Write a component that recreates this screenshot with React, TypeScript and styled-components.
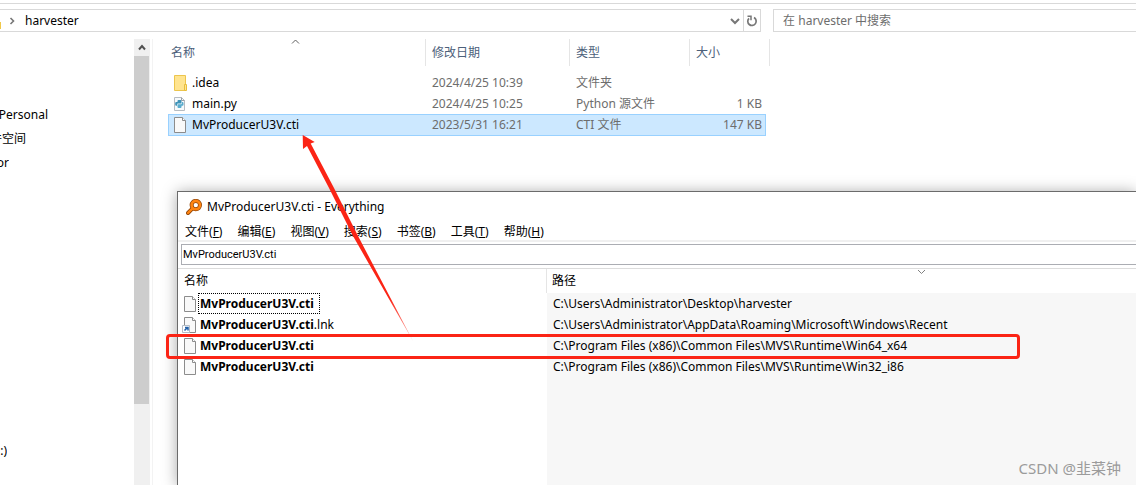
import React from 'react';
import styled, { createGlobalStyle, css } from 'styled-components';

const GlobalStyle = createGlobalStyle`
  *, *::before, *::after { box-sizing: border-box; }
  body { margin: 0; background: #fff; }
  body, button, input, table {
    font-family: "Noto Sans", "Noto Sans CJK SC", sans-serif;
    font-size: 12px;
    line-height: 20px;
    color: #000;
  }
  button { border: 0; padding: 0; background: none; text-align: left; }
  a { color: inherit; text-decoration: none; }
  table { border-spacing: 0; table-layout: fixed; }
  th, td { padding: 0; font-weight: 400; text-align: left; white-space: nowrap; }
`;

const Desktop = styled.main`
  position: relative;
  display: flex;
  flex-direction: column;
  min-height: 100vh;
  overflow: hidden;
`;

const Toolbar = styled.header`
  display: flex;
  gap: 12px;
  margin-top: 3px;
  padding-top: 5px;
  border-top: 1px solid #d9d9d9;
`;

const AddressBar = styled.div`
  display: flex;
  flex: 0 0 67%;
  height: 23px;
  border: 1px solid #d9d9d9;
  border-left: 0;
`;

const FolderEdge = styled.span`
  width: 1px;
  height: 7px;
  margin-top: 12px;
  background: #f0c84a;
`;

const Crumb = styled.button`
  display: flex;
  flex: 1;
  align-items: center;
  gap: 10px;
  padding-left: 8px;
`;

const AddressButton = styled.button<{ $divided?: boolean }>`
  display: flex;
  align-items: center;
  justify-content: center;
  width: 17px;
  ${p => p.$divided && css`border-left: 1px solid #d9d9d9;`}
`;

const FolderSearch = styled.input`
  flex: 1;
  min-width: 0;
  height: 23px;
  padding: 0 9px;
  border: 1px solid #d9d9d9;
  border-right: 0;
  outline: 0;
  &::placeholder { color: #6d6d6d; opacity: 1; }
`;

const Explorer = styled.div`
  display: flex;
  flex: 1;
  padding-top: 7px;
`;

const NavPane = styled.nav`
  display: flex;
  flex-direction: column;
  width: 134px;
  padding: 64px 0 22px;
`;

const NavItem = styled.a<{ $visible: number; $last?: boolean }>`
  display: flex;
  justify-content: flex-end;
  width: ${p => p.$visible}px;
  height: 24px;
  line-height: 24px;
  white-space: nowrap;
  overflow: hidden;
  ${p => p.$last && css`margin-top: auto;`}
`;

const ScrollTrack = styled.div`
  display: flex;
  flex-direction: column;
  width: 16px;
  background: #f0f0f0;
`;

const ScrollUp = styled.button`
  display: flex;
  align-items: center;
  justify-content: center;
  height: 17px;
`;

const ScrollThumb = styled.div`
  flex: 0 0 78%;
  width: 15px;
  background: #cdcdcd;
`;

const FilePane = styled.section`
  flex: 1;
  margin-left: 2px;
  padding-left: 15px;
  border-left: 1px solid #f3f3f3;
`;

const FileTable = styled.table`
  width: 602px;
`;

const FileHead = styled.th`
  padding-bottom: 6px;
`;

const FileHeadLabel = styled.div<{ $first?: boolean }>`
  position: relative;
  height: 27px;
  padding-left: ${p => (p.$first ? 3 : 6)}px;
  border-right: 1px solid #e5e5e5;
  line-height: 27px;
  color: #4c607a;
`;

const SortMark = styled.svg<{ $left: number }>`
  position: absolute;
  top: 0;
  left: ${p => p.$left}px;
`;

const FileCell = styled.td<{ $selected?: boolean; $edge?: 'start' | 'end' }>`
  height: ${p => (p.$selected ? 22 : 21)}px;
  padding: 0 4px 0 6px;
  color: #6d6d6d;
  ${p => p.$edge === 'start' && css`color: #000; padding-left: 5px;`}
  ${p => p.$edge === 'end' && css`text-align: right;`}
  ${p => p.$selected && css`
    background: #cce8ff;
    border: solid #99d1ff;
    border-width: 1px 0;
  `}
  ${p => p.$selected && p.$edge === 'start' && css`border-left-width: 1px; padding-left: 4px;`}
  ${p => p.$selected && p.$edge === 'end' && css`border-right-width: 1px; padding-right: 3px;`}
`;

const FileName = styled.div`
  display: flex;
  align-items: center;
  gap: 5px;
`;

const Window = styled.section`
  position: absolute;
  top: 191px;
  right: 0;
  bottom: 0;
  left: 177px;
  display: flex;
  flex-direction: column;
  border: solid #6b6b6b;
  border-width: 1px 0 0 1px;
  background: #fff;
  box-shadow: 0 1px 14px rgba(0, 0, 0, 0.34);
`;

const TitleBar = styled.div`
  display: flex;
  align-items: center;
  gap: 5px;
  height: 29px;
  padding-left: 8px;
`;

const Title = styled.h1`
  margin: 0;
  font-size: 12px;
  font-weight: 400;
`;

const MenuBar = styled.div`
  display: flex;
  gap: 15px;
  height: 21px;
  padding-left: 7px;
  border-bottom: 2px solid #f0f0f0;
`;

const MenuButton = styled.button`
  height: 21px;
  line-height: 21px;
  white-space: nowrap;
`;

const SearchRow = styled.div`
  display: flex;
  padding: 2px 0 3px 3px;
  border-bottom: 1px solid #dcdcdc;
`;

const SearchInput = styled.input`
  flex: 1;
  height: 21px;
  padding: 0 1px;
  border: 1px solid #abadb3;
  border-right: 0;
  outline: 0;
  font-family: Roboto, sans-serif;
  font-size: 11px;
`;

const Results = styled.div`
  flex: 1;
  background: linear-gradient(to right, #fff 369px, #f7f7f7 369px);
`;

const ResultTable = styled.table`
  width: 100%;
`;

const ResultHead = styled.th`
  position: relative;
  height: 24px;
  padding-left: 6px;
  background: #fff;
  & + & { border-left: 1px solid #e5e5e5; padding-left: 5px; }
`;

const ResultCell = styled.td`
  height: 21px;
  padding-left: 5px;
  & + & { padding-left: 7px; }
`;

const ResultName = styled.div`
  display: flex;
  align-items: center;
  gap: 1px;
`;

const ResultText = styled.span<{ $focused?: boolean }>`
  height: 21px;
  padding: 0 5px 0 1px;
  border: 1px dotted ${p => (p.$focused ? '#000' : 'transparent')};
  line-height: 19px;
`;

const Highlight = styled.div`
  position: absolute;
  top: 334px;
  left: 166px;
  width: 854px;
  height: 25px;
  border: 3px solid #fb2415;
  border-radius: 4px;
`;

const Arrow = styled.svg`
  position: absolute;
  top: 130px;
  left: 290px;
`;

const Watermark = styled.footer`
  position: absolute;
  right: 15px;
  bottom: 7px;
  font-size: 15px;
  color: #9b9b9b;
`;

const FolderIcon = () => (
  <svg width="14" height="16" viewBox="0 0 14 16" aria-hidden="true">
    <path d="M1.500 .5h11v15h-11z" fill="#ffe48f" stroke="#ecc54d" />
    <path d="M11.500 9.500h2v6h-2z" fill="#ffe48f" stroke="#e8bd3c" />
  </svg>
);

const PageIcon = ({ shortcut = false }: { shortcut?: boolean }) => (
  <svg width="14" height="16" viewBox="0 0 14 16" overflow="visible" aria-hidden="true">
    <path d="M1.500 .5h8l3 3v12h-11z" fill="#f9f9f9" stroke="#8c8c8c" />
    <path d="M9.500 .5v3h3" fill="#fff" stroke="#8c8c8c" />
    {shortcut && (
      <g>
        <path d="M-.5 8.500h7v7h-7z" fill="#fff" stroke="#b4bcc6" />
        <path d="M1.500 13.500l2.500-2.500M2 10.500h3v3" fill="none" stroke="#2360a8" strokeWidth="1.500" />
      </g>
    )}
  </svg>
);

const PythonIcon = () => (
  <svg width="14" height="16" viewBox="0 0 14 16" aria-hidden="true">
    <path d="M1.500 1.500h7l3 3v10h-10z" fill="#f7fafc" stroke="#b6bcc2" />
    <path d="M8.500 1.500v3h3" fill="none" stroke="#9aa0a6" />
    <path d="M4.500 5a1 1 0 0 1 1-1h2a1 1 0 0 1 1 1v2.500h-3.500a1 1 0 0 0-1 1v1.200h-.8a1 1 0 0 1-1-1v-1.700a1 1 0 0 1 1-1h1.300z" fill="#3e93b8" />
    <path d="M9 6h.5a1 1 0 0 1 1 1v1.700a1 1 0 0 1-1 1H8.500v1.300a1 1 0 0 1-1 1h-2a1 1 0 0 1-1-1V8.300h3.500a1 1 0 0 0 1-1z" fill="#5aaccd" />
  </svg>
);

const EverythingIcon = () => (
  <svg width="16" height="16" viewBox="0 0 16 16" aria-hidden="true">
    <path d="M6.300 9.700l-4.300 4.300" stroke="#8f4509" strokeWidth="4" strokeLinecap="round" />
    <circle cx="9.800" cy="6.100" r="4.200" fill="#fff" stroke="#8f4509" strokeWidth="4" />
    <path d="M6.300 9.700l-4.300 4.300" stroke="#ff8410" strokeWidth="2.400" strokeLinecap="round" />
    <circle cx="9.800" cy="6.100" r="4.200" fill="none" stroke="#ff8410" strokeWidth="2.600" />
  </svg>
);

const files = [
  { name: '.idea', date: '2024/4/25 10:39', type: '文件夹', size: '', icon: <FolderIcon /> },
  { name: 'main.py', date: '2024/4/25 10:25', type: 'Python 源文件', size: '1 KB', icon: <PythonIcon /> },
  { name: 'MvProducerU3V.cti', date: '2023/5/31 16:21', type: 'CTI 文件', size: '147 KB', icon: <PageIcon />, selected: true },
];

const menus = [
  ['文件', 'F'], ['编辑', 'E'], ['视图', 'V'], ['搜索', 'S'], ['书签', 'B'], ['工具', 'T'], ['帮助', 'H'],
];

const results = [
  { rest: '', path: 'C:\\Users\\Administrator\\Desktop\\harvester', focused: true },
  { rest: '.lnk', path: 'C:\\Users\\Administrator\\AppData\\Roaming\\Microsoft\\Windows\\Recent' },
  { rest: '', path: 'C:\\Program Files (x86)\\Common Files\\MVS\\Runtime\\Win64_x64' },
  { rest: '', path: 'C:\\Program Files (x86)\\Common Files\\MVS\\Runtime\\Win32_i86' },
];

export default function App() {
  return (
    <Desktop>
      <GlobalStyle />
      <Toolbar>
        <AddressBar>
          <FolderEdge />
          <Crumb>
            <svg width="6" height="8" viewBox="0 0 6 8" aria-hidden="true">
              <path d="M1.500 1l3 3-3 3" fill="none" stroke="#777" strokeWidth="1.600" />
            </svg>
            harvester
          </Crumb>
          <AddressButton aria-label="历史记录">
            <svg width="10" height="8" viewBox="0 0 10 8" aria-hidden="true">
              <path d="M1 2l4 4 4-4" fill="none" stroke="#777" strokeWidth="2" />
            </svg>
          </AddressButton>
          <AddressButton $divided aria-label="刷新">
            <svg width="12" height="12" viewBox="0 0 12 12" aria-hidden="true">
              <path d="M8 2.600A4.200 4.200 0 1 1 3 3.300" fill="none" stroke="#777" strokeWidth="1.700" />
              <path d="M1.500 1.200H5v4" fill="none" stroke="#777" strokeWidth="1.500" />
            </svg>
          </AddressButton>
        </AddressBar>
        <FolderSearch aria-label="搜索文件夹" placeholder="在 harvester 中搜索" />
      </Toolbar>

      <Explorer>
        <NavPane>
          <NavItem href="#personal" $visible={48}>Personal</NavItem>
          <NavItem href="#space" $visible={26}>件空间</NavItem>
          <NavItem href="#or" $visible={9}>or</NavItem>
          <NavItem href="#drive" $visible={7} $last>:)</NavItem>
        </NavPane>
        <ScrollTrack>
          <ScrollUp aria-label="向上滚动">
            <svg width="8" height="7" viewBox="0 0 8 7" aria-hidden="true">
              <path d="M1 5.500l3-3.500 3 3.500" fill="none" stroke="#505050" strokeWidth="2" />
            </svg>
          </ScrollUp>
          <ScrollThumb />
        </ScrollTrack>
        <FilePane>
          <FileTable>
            <colgroup>
              <col style={{ width: 258 }} />
              <col style={{ width: 144 }} />
              <col style={{ width: 120 }} />
              <col style={{ width: 76 }} />
              <col style={{ width: 4 }} />
            </colgroup>
            <thead>
              <tr>
                <FileHead>
                  <FileHeadLabel $first>
                    名称
                    <SortMark $left={123} width="9" height="6" viewBox="0 0 9 6" aria-hidden="true">
                      <path d="M1 4.500l3.500-3.500 3.500 3.500" fill="none" stroke="#606060" />
                    </SortMark>
                  </FileHeadLabel>
                </FileHead>
                <FileHead><FileHeadLabel>修改日期</FileHeadLabel></FileHead>
                <FileHead><FileHeadLabel>类型</FileHeadLabel></FileHead>
                <FileHead colSpan={2}><FileHeadLabel>大小</FileHeadLabel></FileHead>
              </tr>
            </thead>
            <tbody>
              {files.map(f => (
                <tr key={f.name}>
                  <FileCell $selected={f.selected} $edge="start">
                    <FileName>{f.icon}{f.name}</FileName>
                  </FileCell>
                  <FileCell $selected={f.selected}>{f.date}</FileCell>
                  <FileCell $selected={f.selected}>{f.type}</FileCell>
                  <FileCell $selected={f.selected} $edge="end">{f.size}</FileCell>
                </tr>
              ))}
            </tbody>
          </FileTable>
        </FilePane>
      </Explorer>

      <Window>
        <TitleBar>
          <EverythingIcon />
          <Title>MvProducerU3V.cti - Everything</Title>
        </TitleBar>
        <MenuBar>
          {menus.map(([label, key]) => (
            <MenuButton key={key}>{label}(<u>{key}</u>)</MenuButton>
          ))}
        </MenuBar>
        <SearchRow>
          <SearchInput aria-label="搜索" defaultValue="MvProducerU3V.cti" />
        </SearchRow>
        <Results>
          <ResultTable>
            <colgroup>
              <col style={{ width: 368 }} />
              <col />
            </colgroup>
            <thead>
              <tr>
                <ResultHead>名称</ResultHead>
                <ResultHead>
                  路径
                  <SortMark $left={370} width="9" height="6" viewBox="0 0 9 6" aria-hidden="true">
                    <path d="M1 1l3.500 3.500L8 1" fill="none" stroke="#808080" />
                  </SortMark>
                </ResultHead>
              </tr>
            </thead>
            <tbody>
              {results.map(r => (
                <tr key={r.path}>
                  <ResultCell>
                    <ResultName>
                      <PageIcon shortcut={r.rest !== ''} />
                      <ResultText $focused={r.focused}><b>MvProducerU3V.cti</b>{r.rest}</ResultText>
                    </ResultName>
                  </ResultCell>
                  <ResultCell>{r.path}</ResultCell>
                </tr>
              ))}
            </tbody>
          </ResultTable>
        </Results>
      </Window>

      <Highlight />
      <Arrow width="126" height="212" viewBox="290 130 126 212" aria-hidden="true">
        <defs>
          <linearGradient id="tail" x1="303" y1="135" x2="412" y2="338" gradientUnits="userSpaceOnUse">
            <stop offset="0.8" stopColor="#fb2415" />
            <stop offset="1" stopColor="#fb2415" stopOpacity="0.4" />
          </linearGradient>
        </defs>
        <path
          d="M302.700 135l12 7-4 1.500L334 188l23 46 56 107-60-105-24-48-22-42-4 3z"
          fill="url(#tail)"
        />
      </Arrow>
      <Watermark>CSDN @韭菜钟</Watermark>
    </Desktop>
  );
}
